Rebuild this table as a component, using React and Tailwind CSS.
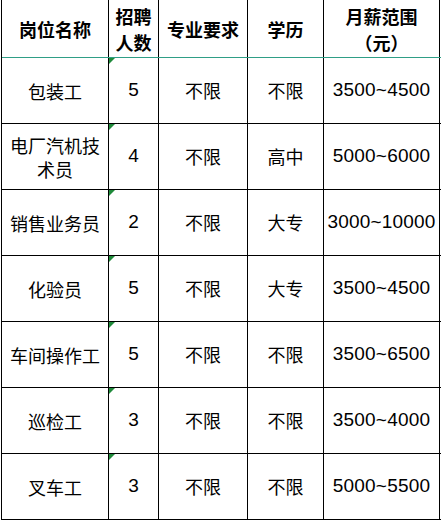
const rows = [
  ['包装工', '5', '不限', '不限', '3500~4500'],
  ['电厂汽机技术员', '4', '不限', '高中', '5000~6000'],
  ['销售业务员', '2', '不限', '大专', '3000~10000'],
  ['化验员', '5', '不限', '大专', '3500~4500'],
  ['车间操作工', '5', '不限', '不限', '3500~6500'],
  ['巡检工', '3', '不限', '不限', '3500~4000'],
  ['叉车工', '3', '不限', '不限', '5000~5500'],
];

const cjk = "font-['Noto_Sans_CJK_SC',sans-serif]";
const num = "font-['Liberation_Sans','Noto_Sans_CJK_SC',sans-serif]";
const cols = 'grid grid-cols-[107px_50px_89px_76px_116px]';
const cell = 'flex items-center justify-center text-center border-r border-black';

function Marker() {
  return (
    <span className="absolute left-0 top-0 w-0 h-0 border-t-[6px] border-r-[6px] border-t-[#1f8a3a] border-r-transparent" />
  );
}

export default function App() {
  return (
    <div className="w-[442px] h-[520px] bg-white overflow-hidden pl-px">
      <div className="w-[440px] border-l border-black text-black">
        <div className={`${cols} h-[58px] border-b border-[#2f9e86] font-bold text-[18px] leading-[26px] ${cjk}`}>
          <div className={cell}>岗位名称</div>
          <div className={cell}>招聘<br />人数</div>
          <div className={cell}>专业要求</div>
          <div className={cell}>学历</div>
          <div className={cell}>月薪范围<br />（元）</div>
        </div>
        {rows.map((r, i) => (
          <div key={i} className={`${cols} h-[66px] border-b border-black`}>
            <div className={`${cell} ${cjk} text-[18px] leading-[24px] px-1`}>
              {r[0] === '电厂汽机技术员' ? (<span>电厂汽机技<br />术员</span>) : r[0]}
            </div>
            <div className={`${cell} ${num} text-[19px] relative`}>
              <Marker />
              {r[1]}
            </div>
            <div className={`${cell} ${cjk} text-[18px]`}>{r[2]}</div>
            <div className={`${cell} ${cjk} text-[18px]`}>{r[3]}</div>
            <div className={`${cell} ${num} text-[19px] tracking-[0.2px]`}>{r[4]}</div>
          </div>
        ))}
      </div>
    </div>
  );
}
